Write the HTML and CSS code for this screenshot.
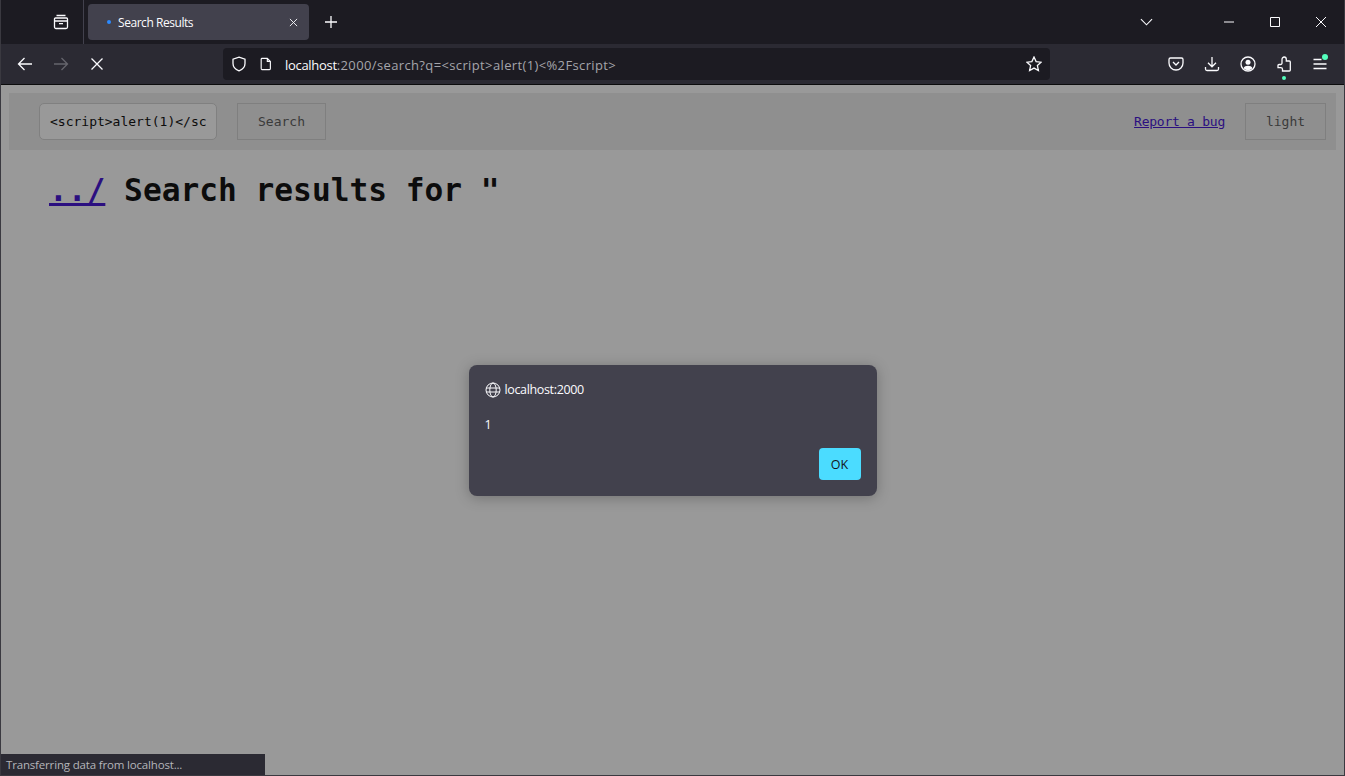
FILE: index.html
```html
<!DOCTYPE html>
<html lang="en">
<head>
  <meta charset="UTF-8" />
  <title>Search Results</title>
  <link rel="stylesheet" href="styles.css">
</head>
<body>
  <div class="window">
    <div class="tabbar">
      <div class="tabs-left">
        <svg class="icon" viewBox="0 0 16 16"><path d="M3.5 1.5h9M2.5 4h11a1 1 0 0 1 1 1v8a1.5 1.5 0 0 1-1.5 1.5H3A1.5 1.5 0 0 1 1.5 13V5a1 1 0 0 1 1-1zM1.5 7h13M6 9.7h4"/></svg>
      </div>
      <div class="tab">
        <span class="tab-dot"></span>
        <span class="tab-title">Search Results</span>
        <svg class="tab-close" viewBox="0 0 10 10"><path d="M1 1l8 8M9 1l-8 8"/></svg>
      </div>
      <div class="btn-new">
        <svg class="icon" viewBox="0 0 16 16"><path d="M8 2v12M2 8h12"/></svg>
      </div>
      <div class="tabbar-space"></div>
      <div class="btn-win chevron">
        <svg viewBox="0 0 14 8"><path d="M1 1l6 6 6-6"/></svg>
      </div>
      <div class="win-controls">
        <div class="btn-win"><svg viewBox="0 0 10 10"><path d="M0 5h10"/></svg></div>
        <div class="btn-win"><svg viewBox="0 0 10 10"><path d="M.5.5h9v9h-9z"/></svg></div>
        <div class="btn-win"><svg viewBox="0 0 10 10"><path d="M0 0l10 10M10 0L0 10"/></svg></div>
      </div>
    </div>

    <div class="toolbar">
      <div class="tool"><svg class="icon" viewBox="0 0 16 16"><path d="M15 8H1.5M7.5 2l-6 6 6 6"/></svg></div>
      <div class="tool off"><svg class="icon" viewBox="0 0 16 16"><path d="M1 8h13.500M8.500 2l6 6-6 6"/></svg></div>
      <div class="tool"><svg class="icon" viewBox="0 0 16 16"><path d="M2.500 2.500l11 11M13.500 2.500l-11 11"/></svg></div>
      <div class="urlbar">
        <svg class="icon shield" viewBox="0 0 16 16"><path d="M8 1.200l6 2v4.300c0 3.500-2.500 6-6 7.300-3.500-1.300-6-3.800-6-7.300V3.200z"/></svg>
        <svg class="icon page-ic" viewBox="0 0 16 16"><path d="M3.500 1.500h6l3.500 3.500v8a1.500 1.500 0 0 1-1.500 1.500h-8A1.500 1.500 0 0 1 2.500 13V2.500a1 1 0 0 1 1-1zM9.500 1.500V5H13"/></svg>
        <span class="url"><b>localhost</b>:2000/search?q=&lt;script&gt;alert(1)&lt;%2Fscript&gt;</span>
        <svg class="icon star" viewBox="0 0 16 16"><path d="M8 1l2.100 4.600 5 .6-3.700 3.400 1 4.900L8 12.100l-4.400 2.400 1-4.900L.9 6.200l5-.6z"/></svg>
      </div>
      <div class="tool"><svg class="icon" viewBox="0 0 16 16"><path d="M2.500 2h11A1.500 1.500 0 0 1 15 3.500V7a7 7 0 0 1-14 0V3.500A1.500 1.500 0 0 1 2.500 2zM5 6l3 3 3-3"/></svg></div>
      <div class="tool"><svg class="icon" viewBox="0 0 16 16"><path d="M8 1v9.500M4 6.800l4 4 4-4M1.500 11v2a1.500 1.500 0 0 0 1.500 1.500h10a1.500 1.500 0 0 0 1.500-1.500v-2"/></svg></div>
      <div class="tool"><svg class="icon" viewBox="0 0 16 16"><circle cx="8" cy="8" r="7"/><circle class="solid" cx="8" cy="6.300" r="2.500"/><path class="solid" d="M3.500 12.200c.8-1.600 2.500-2.400 4.500-2.400s3.700.8 4.500 2.400A6.500 6.500 0 0 1 8 14.300a6.500 6.500 0 0 1-4.500-2.100z"/></svg></div>
      <div class="tool">
        <svg class="icon" viewBox="0 0 16 16"><path d="M6 5V3.500C6 2 7 1 8.200 1s2.100 1 2.100 2.300V5h3a1 1 0 0 1 1 1v8a1 1 0 0 1-1 1H6.500V13.300c0-1-.8-1.700-1.800-1.700H2V9.500a1 1 0 0 1 1-1h1.500c1 0 1.500-.7 1.500-1.500z"/></svg>
        <span class="dot-under"></span>
      </div>
      <div class="tool">
        <svg class="icon" viewBox="0 0 16 16"><path d="M1.500 3.500h8M1.500 8h13M1.500 12.500h13"/></svg>
        <span class="dot-badge"></span>
      </div>
    </div>

    <div class="page">
      <nav class="nav">
        <form class="search">
          <input class="search-input" type="text" value="&lt;script&gt;alert(1)&lt;/script&gt;" />
          <button class="btn" type="button">Search</button>
        </form>
        <a class="nav-link" href="#">Report a bug</a>
        <button class="btn btn-theme" type="button">light</button>
      </nav>
      <h1 class="heading"><a href="#">../</a> Search results for "</h1>

      <div class="modal-wrap">
        <div class="modal">
          <div class="modal-origin">
            <svg class="globe" viewBox="0 0 16 16"><circle cx="8" cy="8" r="7"/><ellipse cx="8" cy="8" rx="3.200" ry="7"/><path d="M1 6h14M1 10h14"/></svg>
            <span>localhost:2000</span>
          </div>
          <div class="modal-msg">1</div>
          <div class="modal-foot"><button class="btn-ok" type="button">OK</button></div>
        </div>
      </div>

      <div class="status">Transferring data from localhost...</div>
    </div>
  </div>
</body>
</html>
```

FILE: styles.css
```css
* { box-sizing: border-box; }
html, body { margin: 0; height: 100%; overflow: hidden; }
body { font-family: "Open Sans", "Noto Sans", sans-serif; background: #1c1b22; color: #fbfbfe; }
svg { display: block; }
.window { display: flex; flex-direction: column; height: 776px; border: 1px solid #3a3940; border-top: 0; }

.icon { width: 16px; height: 16px; fill: none; stroke: #fbfbfe; stroke-width: 1.3; }
.icon .solid { fill: #fbfbfe; stroke: none; }

/* tab strip */
.tabbar { display: flex; align-items: center; height: 44px; background: #1c1b22; flex: none; }
.tabs-left { width: 83px; height: 44px; border-right: 1px solid #42414d; display: flex; align-items: center; justify-content: flex-end; padding-right: 14px; flex: none; }
.tab { display: flex; align-items: center; width: 221px; height: 36px; margin-left: 4px; padding-left: 19px; background: #42414d; border-radius: 4px; flex: none; }
.tab-dot { width: 4px; height: 4px; border-radius: 50%; background: #2b8aff; margin-right: 7px; }
.tab-title { font-size: 12px; flex: 1; white-space: nowrap; letter-spacing: -.45px; }
.tab-close { width: 9px; height: 9px; margin-right: 11px; fill: none; stroke: #fbfbfe; stroke-width: 1; }
.btn-new { width: 44px; display: flex; justify-content: center; }
.tabbar-space { flex: 1; }
.btn-win { width: 46px; height: 44px; display: flex; align-items: center; justify-content: center; }
.btn-win svg { width: 10px; height: 10px; fill: none; stroke: #fbfbfe; stroke-width: 1; }
.btn-win.chevron { margin-right: 37px; }
.btn-win.chevron svg { width: 13px; height: 8px; stroke-width: 1.2; }
.win-controls { display: flex; }

/* nav toolbar */
.toolbar { display: flex; align-items: center; height: 41px; padding-left: 6px; background: #2b2a33; border-bottom: 1px solid #0c0c0d; flex: none; }
.tool { position: relative; width: 36px; height: 32px; display: flex; align-items: center; justify-content: center; flex: none; }
.tool.off .icon { stroke: #66656d; }
.urlbar { display: flex; align-items: center; width: 827px; height: 32px; margin: 0 108px; padding: 0 8px; background: #1c1b22; border-radius: 4px; flex: none; }
.shield { margin-right: 12px; }
.page-ic { margin-right: 12px; width: 14px; }
.url { flex: 1; padding-top: 2px; font-size: 13px; color: #a5a5ab; white-space: nowrap; letter-spacing: .37px; }
.url b { font-weight: 400; color: #fbfbfe; letter-spacing: -.3px; }
.dot-under { position: absolute; left: 16px; bottom: 0; width: 4px; height: 4px; border-radius: 50%; background: #54ffbd; }
.dot-badge { position: absolute; right: 10px; top: 6px; width: 6px; height: 6px; border-radius: 50%; background: #54ffbd; }

/* the dimmed page */
.page { position: relative; flex: 1; background: #999999; font-family: "DejaVu Sans Mono", monospace; overflow: hidden; padding: 8px 8px 0; }
.nav { display: flex; align-items: center; height: 57px; padding: 0 10px 0 30px; background: #8f8f8f; }
.search { display: flex; gap: 20px; flex: 1; }
.search-input { width: 178px; height: 37px; padding: 0 10px; font: 13px "DejaVu Sans Mono", monospace; color: #0c0c0c; background: #999999; border: 1px solid #808080; border-radius: 5px; }
.btn { height: 37px; width: 89px; font: 13px "DejaVu Sans Mono", monospace; color: #3a3a3a; background: #8f8f8f; border: 1px solid #7f7f7f; }
.btn-theme { width: 81px; margin-left: 20px; }
.nav-link { font-size: 13px; color: #2b0f80; letter-spacing: -.25px; }
.heading { margin: 21px 0 0 40px; font-size: 31.200px; line-height: 38px; font-weight: 700; color: #0c0c0c; }
.heading a { color: #2b0f80; }

/* alert */
.modal-wrap { position: absolute; top: 280px; left: 0; right: 0; display: flex; justify-content: center; }
.modal { width: 408px; height: 131px; padding: 16px; background: #42414d; border-radius: 8px; box-shadow: 0 2px 14px rgba(0, 0, 0, .25); color: #fbfbfe; font-family: "Open Sans", "Noto Sans", sans-serif; font-size: 12.500px; }
.modal-origin { display: flex; align-items: center; gap: 4px; height: 17px; letter-spacing: -.35px; }
.globe { width: 16px; height: 16px; fill: none; stroke: #fbfbfe; stroke-width: 1; }
.modal-msg { margin-top: 18px; height: 18px; line-height: 18px; }
.modal-foot { display: flex; justify-content: flex-end; margin-top: 14px; }
.btn-ok { width: 42px; height: 32px; padding: 0; font: 12.500px "Open Sans", sans-serif; color: #15141a; background: #4bdcff; border: 0; border-radius: 4px; }

/* status panel */
.status { position: absolute; left: 0; bottom: 0; width: 264px; height: 21px; padding: 3px 0 0 5px; background: #2b2a33; color: #b5b5ba; font-family: "Open Sans", sans-serif; font-size: 11.500px; white-space: nowrap; letter-spacing: -.17px; }
```
